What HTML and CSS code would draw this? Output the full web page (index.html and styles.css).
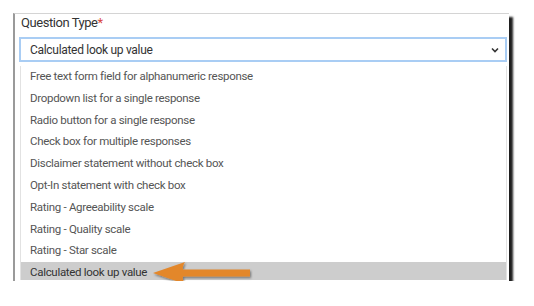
FILE: index.html
```html
<!DOCTYPE html>
<html lang="en">
<head>
  <meta charset="UTF-8">
  <title>Question Type</title>
  <link rel="stylesheet" href="styles.css">
</head>
<body>
  <div class="panel">
    <div class="label">Question Type<span class="req">*</span></div>
    <div class="select">
      <span>Calculated look up value</span>
      <svg class="chevron" width="8" height="6" viewBox="0 0 8 6"><path d="M1 1.5 L4 4.5 L7 1.5" fill="none" stroke="#333" stroke-width="1.6"/></svg>
    </div>
    <ul class="options">
      <li>Free text form field for alphanumeric response</li>
      <li>Dropdown list for a single response</li>
      <li>Radio button for a single response</li>
      <li>Check box for multiple responses</li>
      <li>Disclaimer statement without check box</li>
      <li>Opt-In statement with check box</li>
      <li>Rating - Agreeability scale</li>
      <li>Rating - Quality scale</li>
      <li>Rating - Star scale</li>
      <li class="selected">Calculated look up value</li>
    </ul>
    <!-- callout arrow -->
    <svg class="arrow" width="110" height="34" viewBox="0 0 110 34">
      <defs>
        <filter id="sh" x="-10%" y="-20%" width="130%" height="160%">
          <feDropShadow dx="1" dy="1.5" stdDeviation="1" flood-color="#000" flood-opacity="0.45"/>
        </filter>
      </defs>
      <path filter="url(#sh)" fill="#e3872b" d="M3 15 L35 4 Q32 9 33 11.5 L100 11.5 L100 18.5 L33 18.5 Q32 21 35 26 Z"/>
    </svg>
  </div>
</body>
</html>
```

FILE: styles.css
```css
body {
  margin: 0;
  background: #fff;
  font-family: Roboto, "Liberation Sans", sans-serif;
}
.panel {
  position: relative;
  margin: 13px 0 0 13px;
  width: 494px;
  height: 267px;
  border-top: 1px solid #d4d4d4;
  border-left: 2px solid #9a9a9a;
  background: #fff;
  box-shadow: 4px 4px 2px rgba(0, 0, 0, 0.88);
}
.label {
  font-size: 13px;
  letter-spacing: -0.45px;
  line-height: 17px;
  color: #333;
  padding: 0 0 6px 6px;
}
.req {
  color: #d9453d;
}
.select {
  display: flex;
  align-items: center;
  justify-content: space-between;
  height: 21px;
  margin: 0 2px 0 4px;
  padding: 0 6px 0 9px;
  border: 2px solid #a9cdf4;
  font-size: 12px;
  letter-spacing: -0.3px;
  color: #333;
}
.chevron {
  margin-top: 1px;
}
.options {
  list-style: none;
  height: 214px;
  overflow: hidden;
  margin: 4px 2px 0 5px;
  padding: 0;
  border-left: 1px solid #e2e2e2;
  border-right: 1px solid #e2e2e2;
}
.options li {
  height: 21.8px;
  line-height: 21.8px;
  padding-left: 9px;
  font-size: 11.5px;
  letter-spacing: -0.3px;
  color: #555;
}
.options li.selected {
  background: #cdcdcd;
  color: #333;
}
.arrow {
  position: absolute;
  left: 135px;
  top: 244px;
}
```
